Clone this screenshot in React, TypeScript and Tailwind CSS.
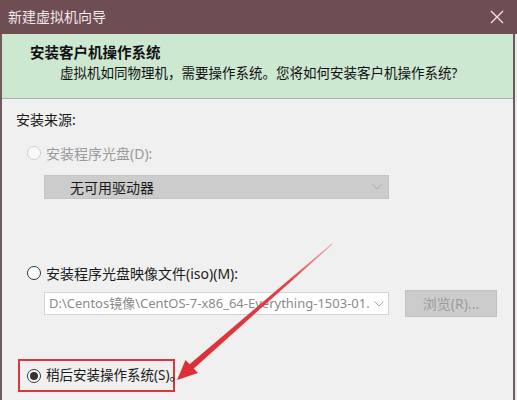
import React from "react";

const FONT = { fontFamily: '"Noto Sans", "Noto Sans CJK SC", sans-serif' };

function Radio({ state }: { state: "disabled" | "off" | "on" }) {
  if (state === "disabled")
    return <span className="inline-block w-[14px] h-[14px] rounded-full border border-[#cfcfcf] bg-[#f9f9f9] shrink-0" />;
  return (
    <span className="inline-flex items-center justify-center w-[14px] h-[14px] rounded-full border border-[#333] bg-white shrink-0">
      {state === "on" && <span className="block w-[8px] h-[8px] rounded-full bg-[#333]" />}
    </span>
  );
}

function Chevron() {
  return (
    <svg width="10" height="6" viewBox="0 0 10 6" className="shrink-0">
      <path d="M0.5 0.5 L5 5 L9.5 0.5" fill="none" stroke="#a8a8a8" strokeWidth="1" />
    </svg>
  );
}

export default function App() {
  return (
    <div className="relative w-[517px] h-[400px] overflow-hidden bg-[#e9e9e9] text-[14px] text-[#1a1a1a]" style={FONT}>
      {/* title bar */}
      <div className="h-[34px] bg-[#6e4d53] flex items-center justify-between pl-[8px] pr-[13px]">
        <span className="text-[#f2e8ea] text-[14px] leading-[20px]">新建虚拟机向导</span>
        <svg width="14" height="14" viewBox="0 0 14 14">
          <path d="M1 1 L13 13 M13 1 L1 13" stroke="#f2e8ea" strokeWidth="1.3" />
        </svg>
      </div>
      <div className="w-[515px] h-[366px] border-l-2 border-r-2 border-[#6f5a5e] flex flex-col">
        {/* header */}
        <div className="h-[65px] bg-[#cde8d1] border-b border-[#a3b3a6] pl-[28px] pt-[8px] shrink-0">
          <div className="font-bold text-[14.5px] leading-[20px] text-[#111]">安装客户机操作系统</div>
          <div className="mt-[1px] pl-[30px] text-[13.5px] leading-[20px] text-[#111]">
            虚拟机如同物理机，需要操作系统。您将如何安装客户机操作系统?
          </div>
        </div>
        {/* body */}
        <div className="flex-1 bg-[#f0f0f0] pl-[14px] pt-[11px]">
          <div className="leading-[20px]">安装来源:</div>
          <div className="mt-[13px] ml-[11px] flex items-center gap-[5px] h-[20px]">
            <Radio state="disabled" />
            <span className="text-[#9a9a9a]">安装程序光盘(D):</span>
          </div>
          <div className="mt-[12px] ml-[28px] w-[345px] h-[24px] bg-[#cccccc] border border-[#c4c4c4] flex items-center justify-between pl-[25px] pr-[6px]">
            <span className="text-[#1a1a1a]">无可用驱动器</span>
            <Chevron />
          </div>
          <div className="mt-[64px] ml-[11px] flex items-center gap-[5px] h-[20px]">
            <Radio state="off" />
            <span>安装程序光盘映像文件(iso)(M):</span>
          </div>
          <div className="mt-[7px] h-[27px] flex items-center">
            <div className="ml-[28px] w-[345px] h-[23px] bg-white border border-[#d4d4d4] flex items-center justify-between pl-[4px] pr-[4px]">
              <span className="text-[#8a8a8a] whitespace-nowrap text-[13px]">D:\Centos镜像\CentOS-7-x86_64-Everything-1503-01.</span>
              <Chevron />
            </div>
            <div className="ml-[16px] w-[92px] h-[27px] bg-[#cccccc] border border-[#c2c2c2] flex items-center justify-center text-[#9c9c9c]">
              浏览(R)...
            </div>
          </div>
          <div className="mt-[42px] ml-[2px] w-[157px] h-[33px] border-2 border-[#d9363e] flex items-center pl-[7px] gap-[5px]">
            <Radio state="on" />
            <span className="whitespace-nowrap text-[13.5px]">稍后安装操作系统(S)。</span>
          </div>
        </div>
      </div>
      {/* red arrow overlay */}
      <svg className="absolute left-0 top-0 pointer-events-none" width="517" height="400" viewBox="0 0 517 400">
        <defs>
          <linearGradient id="g" x1="332" y1="244" x2="190" y2="367" gradientUnits="userSpaceOnUse">
            <stop offset="0" stopColor="#e8585c" stopOpacity="0.4" />
            <stop offset="0.3" stopColor="#e04045" />
            <stop offset="1" stopColor="#dc2f36" />
          </linearGradient>
        </defs>
        <polygon points="332.4,244.4 331.6,243.6 189,364.8 193,369.2" fill="url(#g)" />
        <polygon points="177,380 185.5,360 198,373" fill="#dc2f36" />
      </svg>
    </div>
  );
}
